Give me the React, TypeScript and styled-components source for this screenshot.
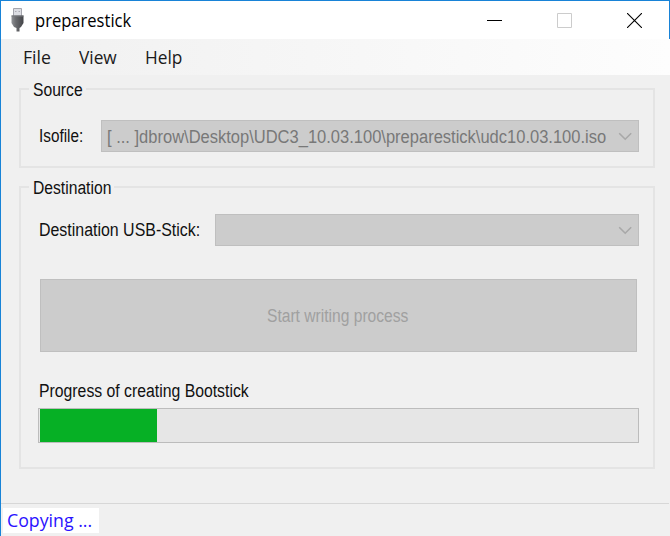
import React from "react";
import styled, { createGlobalStyle } from "styled-components";

const GlobalStyle = createGlobalStyle`
  * { box-sizing: border-box; }
  body { margin: 0; background: #f0f0f0; overflow: hidden; }
`;

const systemFont = `"Open Sans", "Noto Sans", sans-serif`;
const formFont = `"Liberation Sans", Arial, sans-serif`;

const Window = styled.div`
  width: 670px;
  height: 536px;
  display: flex;
  flex-direction: column;
  background: #f0f0f0;
  border-left: 1px solid #1883d7;
  font: 18px/20px ${formFont};
  color: #111;
  cursor: default;
`;

const TitleBar = styled.header`
  height: 39px;
  flex: none;
  display: flex;
  align-items: center;
  padding-left: 9px;
  background: #fff;
  border-top: 1px solid #1883d7;
  border-right: 1px solid #1883d7;
`;

/* Condensed run of text; the scale narrows glyphs without changing their height. */
const Text = styled.span<{ $scale?: number }>`
  display: inline-block;
  white-space: pre;
  transform: scaleX(${(p) => p.$scale ?? 1});
  transform-origin: left center;
`;

const Title = styled.h1`
  flex: 1;
  margin: 0 0 0 11px;
  font: 400 18px/24px ${systemFont};
  color: #000;
`;

const CaptionButton = styled.button`
  width: 70px;
  height: 38px;
  display: flex;
  align-items: center;
  justify-content: center;
  padding: 0;
  border: 0;
  background: none;
`;

const MenuBar = styled.nav`
  height: 36px;
  flex: none;
  display: flex;
  padding-left: 22px;
  background: linear-gradient(90deg, #f0f0f0, #fdfdfd);
  font: 18px/36px ${systemFont};
  color: #1a1a1a;
`;

const MenuItem = styled.span<{ $width: number }>`
  width: ${(p) => p.$width}px;
  white-space: nowrap;
`;

const Content = styled.main`
  flex: 1;
  display: flex;
  flex-direction: column;
  gap: 18px;
  padding: 13px 15px 0 18px;
`;

const Group = styled.section<{ $height: number }>`
  height: ${(p) => p.$height}px;
  display: flex;
  flex-direction: column;
  padding: 0 16px 0 18px;
  border: 2px solid #e4e4e4;
`;

const Legend = styled.h2<{ $width: number }>`
  width: ${(p) => p.$width}px;
  height: 20px;
  flex: none;
  margin: -10px 0 0 -10px;
  padding-left: 4px;
  background: #f0f0f0;
  font: inherit;
`;

const Field = styled.div<{ $labelWidth: number; $top: number }>`
  display: grid;
  grid-template-columns: ${(p) => p.$labelWidth}px 1fr;
  align-items: center;
  height: 32px;
  flex: none;
  margin-top: ${(p) => p.$top}px;
  margin-right: -2px;
`;

const Combo = styled.div`
  height: 32px;
  display: flex;
  align-items: center;
  justify-content: space-between;
  padding: 1px 6px 0 5px;
  background: #ccc;
  border: 1px solid #bfbfbf;
  color: #787878;
  min-width: 0;
`;

const ComboValue = styled.span`
  flex: 1 1 0;
  min-width: 0;
`;

const StartButton = styled.button`
  width: 597px;
  height: 73px;
  flex: none;
  margin: 33px 0 0 1px;
  padding: 0 0 0 226px;
  text-align: left;
  background: #ccc;
  border: 1px solid #bfbfbf;
  color: #a0a0a0;
  font: inherit;
`;

const ProgressLabel = styled.div`
  height: 20px;
  margin-top: 29px;
`;

const ProgressTrack = styled.div`
  width: 601px;
  height: 35px;
  flex: none;
  margin: 7px 0 0 -1px;
  padding: 0 1px;
  background: #e6e6e6;
  border: 1px solid #bcbcbc;
`;

const ProgressFill = styled.div`
  height: 100%;
  background: #06b025;
`;

const StatusBar = styled.footer`
  height: 33px;
  flex: none;
  margin-right: 1px;
  padding: 4px 0 0 2px;
  border-top: 1px solid #d7d7d7;
`;

const Status = styled.div`
  width: 96px;
  height: 25px;
  padding-left: 4px;
  background: #fff;
  color: #2a12ff;
  font: 18px/25px ${systemFont};
`;

const UsbIcon = () => (
  <svg width="14" height="26" viewBox="0 0 14 26">
    <defs>
      <linearGradient id="plug" x2="1">
        <stop stopColor="#909296" />
        <stop offset=".35" stopColor="#6b6c70" />
        <stop offset="1" stopColor="#434448" />
      </linearGradient>
    </defs>
    <path d="M3.5 1.5h8v8h-8z" fill="#dcdde3" stroke="#a4a5ad" />
    <path d="M5 4.5h1.5M8.5 4.5H10" stroke="#aaaab2" />
    <path d="M1.5 8.5h12V16L11 20l-1.500 1v3.500h-3V21L4 20l-2.500-4z" fill="url(#plug)" />
    <path d="M1.5 9h12" stroke="#77787c" />
  </svg>
);

const Chevron = () => (
  <svg width="14" height="9" viewBox="0 0 14 9" fill="none" stroke="#a8a8a8" strokeWidth="1.6">
    <path d="M1.200 1.200l6 6 6-6" />
  </svg>
);

export default function App() {
  return (
    <>
      <GlobalStyle />
      <Window>
        <TitleBar>
          <UsbIcon />
          <Title><Text $scale={0.92}>preparestick</Text></Title>
          <CaptionButton aria-label="Minimize">
            <svg width="15" height="15"><path d="M0 7.5h15" stroke="#000" /></svg>
          </CaptionButton>
          <CaptionButton aria-label="Maximize" disabled>
            <svg width="15" height="15"><path d="M.5.5h14v14H.5z" fill="none" stroke="#ccc" /></svg>
          </CaptionButton>
          <CaptionButton aria-label="Close">
            <svg width="15" height="15"><path d="M0 0l15 15M15 0L0 15" stroke="#000" strokeWidth="1.1" /></svg>
          </CaptionButton>
        </TitleBar>
        <MenuBar>
          <MenuItem $width={56}><Text $scale={0.98}>File</Text></MenuItem>
          <MenuItem $width={66}><Text $scale={0.96}>View</Text></MenuItem>
          <MenuItem $width={60}><Text $scale={0.96}>Help</Text></MenuItem>
        </MenuBar>
        <Content>
          <Group $height={80}>
            <Legend $width={57}><Text $scale={0.87}>Source</Text></Legend>
            <Field $labelWidth={62} $top={20}>
              <Text $scale={0.85}>Isofile:</Text>
              <Combo>
                <ComboValue>
                  <Text $scale={0.917}>[ ... ]dbrow\Desktop\UDC3_10.03.100\preparestick\udc10.03.100.iso</Text>
                </ComboValue>
                <Chevron />
              </Combo>
            </Field>
          </Group>
          <Group $height={283}>
            <Legend $width={85}><Text $scale={0.87}>Destination</Text></Legend>
            <Field $labelWidth={176} $top={16}>
              <Text $scale={0.885}>Destination USB-Stick:</Text>
              <Combo>
                <ComboValue />
                <Chevron />
              </Combo>
            </Field>
            <StartButton disabled><Text $scale={0.867}>Start writing process</Text></StartButton>
            <ProgressLabel><Text $scale={0.877}>Progress of creating Bootstick</Text></ProgressLabel>
            <ProgressTrack role="progressbar" aria-valuenow={20}>
              <ProgressFill style={{ width: `${(117 / 597) * 100}%` }} />
            </ProgressTrack>
          </Group>
        </Content>
        <StatusBar><Status><Text $scale={0.985}>Copying ...</Text></Status></StatusBar>
      </Window>
    </>
  );
}
